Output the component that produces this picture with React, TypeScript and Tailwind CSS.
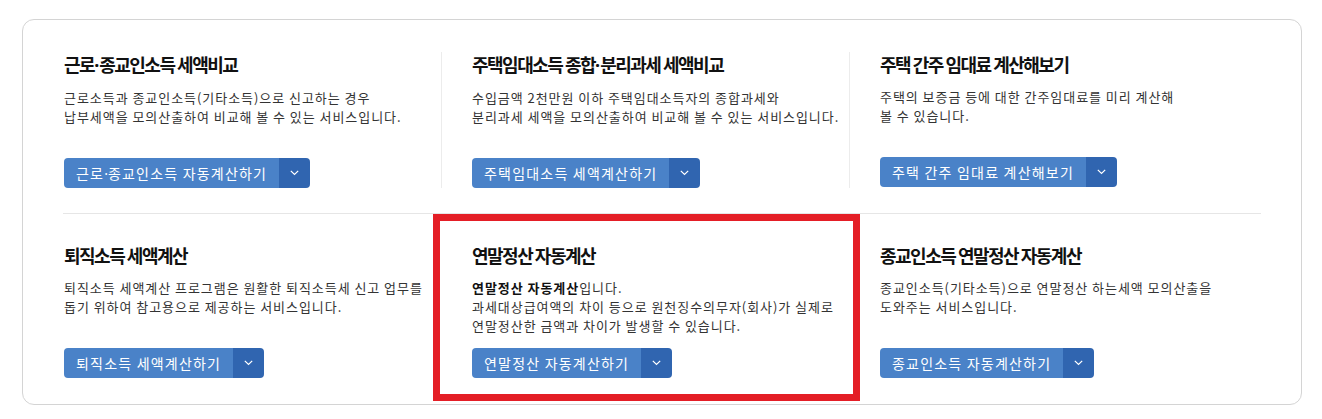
import React from "react";

type Item = {
  title: React.ReactNode;
  desc: React.ReactNode;
  btn: React.ReactNode;
};

const Dot = () => <span className="font-['Noto_Sans'] tracking-normal">·</span>;

const row1: Item[] = [
  {
    title: (
      <>
        근로<Dot />종교인소득 세액비교
      </>
    ),
    desc: (
      <>
        근로소득과 종교인소득(기타소득)으로 신고하는 경우
        <br />
        납부세액을 모의산출하여 비교해 볼 수 있는 서비스입니다.
      </>
    ),
    btn: (
      <>
        근로<Dot />종교인소득 자동계산하기
      </>
    ),
  },
  {
    title: (
      <>
        주택임대소득 종합<Dot />분리과세 세액비교
      </>
    ),
    desc: (
      <>
        수입금액 2천만원 이하 주택임대소득자의 종합과세와
        <br />
        분리과세 세액을 모의산출하여 비교해 볼 수 있는 서비스입니다.
      </>
    ),
    btn: "주택임대소득 세액계산하기",
  },
  {
    title: "주택 간주 임대료 계산해보기",
    desc: (
      <>
        주택의 보증금 등에 대한 간주임대료를 미리 계산해
        <br />볼 수 있습니다.
      </>
    ),
    btn: "주택 간주 임대료 계산해보기",
  },
];

const row2: Item[] = [
  {
    title: "퇴직소득 세액계산",
    desc: (
      <>
        퇴직소득 세액계산 프로그램은 원활한 퇴직소득세 신고 업무를
        <br />
        돕기 위하여 참고용으로 제공하는 서비스입니다.
      </>
    ),
    btn: "퇴직소득 세액계산하기",
  },
  {
    title: "연말정산 자동계산",
    desc: (
      <>
        <b className="font-bold text-[#111]">연말정산 자동계산</b>입니다.
        <br />
        과세대상급여액의 차이 등으로 원천징수의무자(회사)가 실제로
        <br />
        연말정산한 금액과 차이가 발생할 수 있습니다.
      </>
    ),
    btn: "연말정산 자동계산하기",
  },
  {
    title: "종교인소득 연말정산 자동계산",
    desc: (
      <>
        종교인소득(기타소득)으로 연말정산 하는세액 모의산출을
        <br />
        도와주는 서비스입니다.
      </>
    ),
    btn: "종교인소득 자동계산하기",
  },
];

function Chevron() {
  return (
    <svg width="9" height="6" viewBox="0 0 9 6" fill="none">
      <path d="M0.8 0.8L4.5 4.5L8.2 0.8" stroke="white" strokeWidth="1.2" />
    </svg>
  );
}

function Cell({ item, first, divider }: { item: Item; first: boolean; divider: boolean }) {
  return (
    <div
      className={
        (first ? "w-[378px] " : "w-[408px] pl-[30px] ") +
        (divider ? "border-l border-[#ececec] " : "border-l border-transparent ") +
        "flex flex-col"
      }
    >
      <h3 className="text-[18px] leading-[24px] font-bold tracking-[-1.5px] text-[#111]">{item.title}</h3>
      <p className="mt-[11px] h-[57px] whitespace-nowrap text-[13px] leading-[19px] text-[#333] tracking-[0.95px]">
        {item.desc}
      </p>
      <div className="mt-[13px] flex h-[30px] w-max rounded-[4px] overflow-hidden">
        <span className="flex items-center bg-[#4a82c8] px-[12px] text-[14px] tracking-[1.2px] text-white">
          {item.btn}
        </span>
        <span className="flex w-[31px] items-center justify-center bg-[#3065b0]">
          <Chevron />
        </span>
      </div>
    </div>
  );
}

export default function App() {
  return (
    <div
      className="w-[1322px] h-[419px] bg-white pt-[19px] pl-[22px]"
      style={{ fontFamily: '"Noto Sans CJK KR", "Noto Sans", sans-serif' }}
    >
      <div className="w-[1280px] h-[386px] rounded-[12px] border border-[#d4d4d4] pl-[40px]">
        <div className="flex pt-[32px] pb-[25px] w-[1198px] border-b border-[#e6e6e6]">
          {row1.map((it, i) => (
            <Cell key={i} item={it} first={i === 0} divider={i > 0} />
          ))}
        </div>
        <div className="flex pt-[29px]">
          {row2.map((it, i) => (
            <div key={i} className="relative">
              <Cell item={it} first={i === 0} divider={false} />
              {i === 1 && (
                <div className="pointer-events-none absolute left-[-8px] top-[-29px] h-[187px] w-[427px] border-[7px] border-[#e41e26]" />
              )}
            </div>
          ))}
        </div>
      </div>
    </div>
  );
}
